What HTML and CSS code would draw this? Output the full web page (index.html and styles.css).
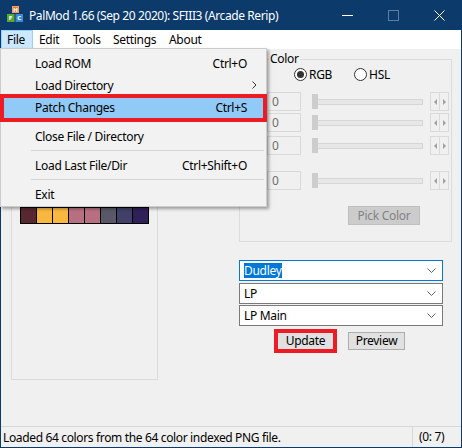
FILE: index.html
```html
<!DOCTYPE html>
<html>
<head>
<meta charset="utf-8">
<link rel="stylesheet" href="styles.css">
</head>
<body>
<div class="window">
  <div class="titlebar">
    <svg class="appicon" width="16" height="16" viewBox="0 0 16 16">
      <rect x="5" y="0" width="7" height="7" fill="#e8783a"/>
      <rect x="5.5" y="0.5" width="6" height="6" fill="none" stroke="#f6a060" stroke-width="1"/>
      <text x="8.5" y="5.6" font-size="5.5" font-family="DejaVu Sans" font-weight="bold" fill="#fff" text-anchor="middle">H</text>
      <rect x="0" y="8" width="7.5" height="8" fill="#5aa832"/>
      <text x="3.7" y="14" font-size="5.5" font-family="DejaVu Sans" font-weight="bold" fill="#fff" text-anchor="middle">F</text>
      <rect x="8.5" y="8" width="7.5" height="8" fill="#3a8ad8"/>
      <text x="12.2" y="14" font-size="5.5" font-family="DejaVu Sans" font-weight="bold" fill="#fff" text-anchor="middle">C</text>
    </svg>
    <span class="title">PalMod 1.66 (Sep 20 2020): SFIII3 (Arcade Rerip)</span>
    <div class="caption">
      <span class="capbtn"><svg width="11" height="11" viewBox="0 0 11 11"><path d="M0 5.5H11" stroke="#fff" stroke-width="1"/></svg></span>
      <span class="capbtn"><svg width="11" height="11" viewBox="0 0 11 11"><rect x="0.5" y="0.5" width="10" height="10" fill="none" stroke="#5f7ea3" stroke-width="1"/></svg></span>
      <span class="capbtn"><svg width="11" height="11" viewBox="0 0 11 11"><path d="M0.5 0.5L10.5 10.5M10.5 0.5L0.5 10.5" stroke="#fff" stroke-width="1"/></svg></span>
    </div>
  </div>

  <div class="menubar">
    <span class="mi mi-file mi-active">File</span>
    <span class="mi mi-edit">Edit</span>
    <span class="mi mi-tools">Tools</span>
    <span class="mi mi-settings">Settings</span>
    <span class="mi mi-about">About</span>
  </div>

  <div class="client">
    <div class="palbox">
      <div class="swatches">
        <i style="background:#582830"></i><i style="background:#f8b840"></i><i style="background:#f8b840"></i><i style="background:#b87080"></i><i style="background:#b87080"></i><i style="background:#585868"></i><i style="background:#404068"></i><i style="background:#302058"></i>
        <i style="background:#582830"></i><i style="background:#f8b840"></i><i style="background:#f8b840"></i><i style="background:#b87080"></i><i style="background:#b87080"></i><i style="background:#585868"></i><i style="background:#404068"></i><i style="background:#302058"></i>
      </div>
    </div>

    <div class="right">
      <div class="colorbox">
        <span class="legend">Color</span>
        <div class="radios">
          <span class="radio"><span class="dot on"></span>RGB</span>
          <span class="radio"><span class="dot"></span>HSL</span>
        </div>
        <div class="crow r1"><span class="edit">0</span><span class="slider"><span class="thumb"></span></span><span class="spin"><span class="sl"></span><span class="sr"></span></span></div>
        <div class="crow r2"><span class="edit">0</span><span class="slider"><span class="thumb"></span></span><span class="spin"><span class="sl"></span><span class="sr"></span></span></div>
        <div class="crow r3"><span class="edit">0</span><span class="slider"><span class="thumb"></span></span><span class="spin"><span class="sl"></span><span class="sr"></span></span></div>
        <div class="crow r4"><span class="edit">0</span><span class="slider"><span class="thumb"></span></span><span class="spin"><span class="sl"></span><span class="sr"></span></span></div>
        <div class="pickrow"><span class="pick">Pick Color</span></div>
      </div>

      <div class="combos">
        <div class="combo focus"><span class="sel">Dudley</span><svg class="chev" width="9" height="5" viewBox="0 0 9 5"><path d="M0.5 0.5L4.5 4.5L8.5 0.5" fill="none" stroke="#606060" stroke-width="1"/></svg></div>
        <div class="combo"><span>LP</span><svg class="chev" width="9" height="5" viewBox="0 0 9 5"><path d="M0.5 0.5L4.5 4.5L8.5 0.5" fill="none" stroke="#606060" stroke-width="1"/></svg></div>
        <div class="combo"><span>LP Main</span><svg class="chev" width="9" height="5" viewBox="0 0 9 5"><path d="M0.5 0.5L4.5 4.5L8.5 0.5" fill="none" stroke="#606060" stroke-width="1"/></svg></div>
      </div>

      <div class="btns">
        <span class="btn upd">Update</span>
        <span class="btn prev">Preview</span>
      </div>
    </div>
  </div>

  <div class="status">
    <span class="stext">Loaded 64 colors from the 64 color indexed PNG file.</span>
    <span class="spane">(0: 7)</span>
  </div>

  <div class="dropmenu">
    <div class="item"><span>Load ROM</span><span class="acc">Ctrl+O</span></div>
    <div class="item"><span>Load Directory</span><svg class="arrow" width="5" height="8" viewBox="0 0 5 8"><path d="M0.5 0.5L4 4L0.5 7.5" fill="none" stroke="#333" stroke-width="1"/></svg></div>
    <div class="item hl"><span>Patch Changes</span><span class="acc">Ctrl+S</span></div>
    <div class="sep"></div>
    <div class="item"><span>Close File / Directory</span></div>
    <div class="sep"></div>
    <div class="item"><span>Load Last File/Dir</span><span class="acc">Ctrl+Shift+O</span></div>
    <div class="sep"></div>
    <div class="item"><span>Exit</span></div>
  </div>

  <div class="redbox red-menu"></div>
  <div class="redbox red-update"></div>
</div>
</body>
</html>
```

FILE: styles.css
```css
* { box-sizing: border-box; }
html, body { margin: 0; padding: 0; }
body {
  width: 462px;
  height: 448px;
  overflow: hidden;
  background: #f0f0f0;
  font-family: "Noto Sans", "Open Sans", sans-serif;
  font-size: 12px;
  color: #000;
}
.window {
  position: relative;
  width: 462px;
  height: 448px;
  border: 1px solid #0b3a6b;
  border-top: 0;
  display: flex;
  flex-direction: column;
  background: #f0f0f0;
}
.titlebar {
  height: 30px;
  margin: 0 -1px;
  background: #0b3a6b;
  display: flex;
  align-items: center;
  color: #fff;
}
.appicon { margin-left: 7px; margin-top: -2px; flex: none; }
.title { margin-left: 6px; font-size: 12px; letter-spacing: -0.4px; white-space: nowrap; }
.caption { margin-left: auto; display: flex; height: 30px; }
.capbtn { width: 46px; height: 30px; display: flex; align-items: center; justify-content: center; }

.menubar {
  height: 19px;
  background: #fff;
  display: flex;
  align-items: stretch;
  line-height: 18px;
  letter-spacing: -0.3px;
}
.mi { padding: 0 0 0 5px; border: 1px solid transparent; border-bottom: 0; }
.mi-file { width: 32px; }
.mi-edit { width: 34px; }
.mi-tools { width: 40px; }
.mi-settings { width: 56px; }
.mi-about { width: 50px; }
.mi-active { background: #cce8ff; border-color: #99d1ff; }

.client {
  flex: 1;
  display: flex;
  align-items: flex-start;
  padding: 9px 0 0 10px;
}
.palbox {
  width: 147px;
  height: 322px;
  border: 1px solid #dcdcdc;
  padding: 132px 0 0 8px;
}
.swatches {
  width: 129px;
  display: grid;
  grid-template-columns: repeat(8, 15px);
  grid-auto-rows: 15px;
  gap: 1px;
  padding: 1px;
  background: #000;
}
.swatches i { display: block; }

.right {
  margin-left: 81px;
  margin-top: 1px;
  display: flex;
  flex-direction: column;
}
.colorbox {
  width: 213px;
  height: 183px;
  border: 1px solid #dcdcdc;
  display: flex;
  flex-direction: column;
}
.legend {
  align-self: flex-start;
  margin: -9px 0 0 29px;
  padding: 0 1px;
  background: #f0f0f0;
  line-height: 16px;
  letter-spacing: -0.3px;
}
.radios { display: flex; height: 16px; margin-top: -1px; align-items: center; }
.radio { display: flex; align-items: center; letter-spacing: -0.3px; }
.radio:first-child { margin-left: 54px; }
.radio + .radio { margin-left: 22px; }
.dot {
  width: 13px; height: 13px; border-radius: 50%;
  border: 1px solid #333;
  background: #fff;
  margin-right: 2px;
  display: flex; align-items: center; justify-content: center;
}
.dot.on::after { content: ""; width: 7px; height: 7px; border-radius: 50%; background: #333; }

.crow { display: flex; align-items: center; height: 19px; padding-left: 27px; }
.r1 { margin-top: 10px; }
.r2 { margin-top: 2px; }
.r3 { margin-top: 4px; }
.r4 { margin-top: 16px; }
.edit {
  width: 34px; height: 19px;
  border: 1px solid #d9d9d9;
  color: #6d6d6d;
  padding-left: 4px;
  line-height: 17px;
}
.slider {
  position: relative;
  width: 111px; height: 15px;
  margin-left: 11px;
  display: flex; align-items: center;
}
.slider::before {
  content: ""; display: block; width: 100%; height: 4px;
  background: #e7e7e7; border: 1px solid #d6d6d6;
}
.thumb {
  position: absolute; left: 0; top: 0;
  width: 6px; height: 15px; background: #cdcdcd;
}
.spin {
  margin-left: 7px;
  width: 19px; height: 19px;
  display: flex;
  border: 1px solid #dadada;
}
.sl, .sr { flex: 1; display: flex; align-items: center; justify-content: center; }
.sl { border-right: 1px solid #dadada; }
.sl::after { content: ""; border-style: solid; border-width: 3px 3px 3px 0; border-color: transparent #a0a0a0 transparent transparent; }
.sr::after { content: ""; border-style: solid; border-width: 3px 0 3px 3px; border-color: transparent transparent transparent #a0a0a0; }
.pickrow { display: flex; margin-top: 16px; padding-left: 108px; }
.pick {
  width: 72px; height: 19px;
  background: #cccccc; border: 1px solid #bfbfbf;
  color: #838383;
  text-align: center; line-height: 17px; letter-spacing: -0.3px;
}

.combos { display: flex; flex-direction: column; gap: 1.5px; margin-top: 18px; }
.combo {
  width: 204px; height: 21px;
  background: #fff; border: 1px solid #7a7a7a;
  display: flex; align-items: center;
  padding-left: 4px;
  letter-spacing: -0.3px;
}
.combo.focus { border-color: #0078d7; }
.combo .sel { background: #0078d7; color: #fff; line-height: 15px; }
.chev { margin-left: auto; margin-right: 6px; }

.btns { display: flex; margin-top: 6px; padding-left: 38px; }
.btn {
  width: 57px; height: 18px;
  background: #e1e1e1; border: 1px solid #adadad;
  text-align: center; line-height: 16px; letter-spacing: -0.3px;
}
.btn + .btn { margin-left: 14px; }

.status {
  height: 21px;
  border-top: 1px solid #d7d7d7;
  display: flex;
  align-items: center;
  letter-spacing: -0.35px;
}
.stext { padding-left: 2px; width: 411px; }
.spane { border-left: 1px solid #d7d7d7; padding-left: 6px; height: 20px; line-height: 20px; }

.dropmenu {
  position: absolute;
  left: -1px; top: 48px;
  width: 267px;
  background: #f2f2f2;
  border: 1px solid #cccccc;
  padding: 3px 2px 1px 2px;
  box-shadow: 2px 2px 3px rgba(0,0,0,0.35);
  letter-spacing: -0.3px;
}
.item {
  height: 22px;
  display: flex; align-items: center;
  padding: 0 17px 0 32px;
}
.item.hl { background: #91c9f7; }
.acc { margin-left: auto; }
.arrow { margin-left: auto; margin-right: -10px; }
.sep { height: 7px; display: flex; align-items: center; padding-left: 28px; }
.sep::after { content: ""; display: block; width: 100%; height: 1px; background: #d4d4d4; }

.redbox { position: absolute; border: 4px solid #ed1c24; }
.red-menu { left: -1px; top: 94px; width: 267px; height: 28px; }
.red-update { left: 273px; top: 329px; width: 63px; height: 24px; }
```
